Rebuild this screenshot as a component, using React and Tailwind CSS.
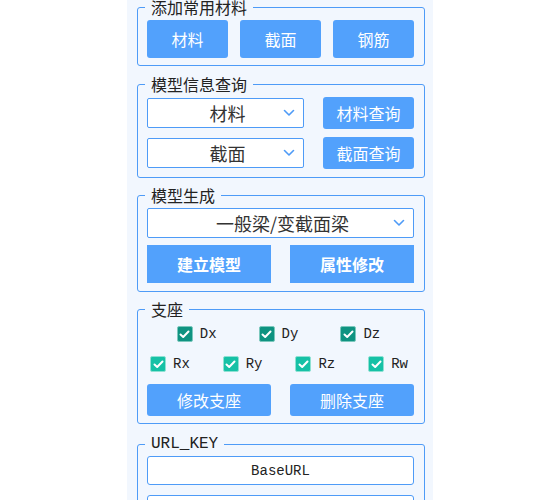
import React from "react";

const CJK = { fontFamily: '"Noto Sans CJK SC", "Noto Sans", sans-serif' };
const MONO = { fontFamily: '"Liberation Mono", "DejaVu Sans Mono", monospace' };

function Chevron() {
  return (
    <svg width="12" height="8" viewBox="0 0 12 8" fill="none">
      <path d="M1.5 1.5 L6 6 L10.5 1.5" stroke="#4e9bf7" strokeWidth="1.6" strokeLinecap="round" strokeLinejoin="round" />
    </svg>
  );
}

function Select({ text, h = "h-[30px]", size = "text-[18px]" }) {
  return (
    <div className={`relative flex items-center justify-center ${h} w-full bg-white border border-[#4e9bf7] rounded-[2px]`}>
      <span className={`${size} leading-none text-[#333] pl-[4px]`}>{text}</span>
      <span className="absolute right-[8px] top-1/2 -translate-y-1/2 flex">
        <Chevron />
      </span>
    </div>
  );
}

function Btn({ children, className = "" }) {
  return (
    <div className={`flex items-center justify-center bg-[#52a1fc] text-white text-[16px] leading-none ${className}`}>
      {children}
    </div>
  );
}

function Box({ dark }) {
  return (
    <span
      className={`flex items-center justify-center w-[16px] h-[16px] rounded-[2px] border ${
        dark ? "bg-[#0f9381] border-[#7cc8bd]" : "bg-[#16c1a6] border-[#8fe1d3]"
      }`}
    >
      <svg width="11" height="9" viewBox="0 0 11 9" fill="none">
        <path d="M1.5 4.5 L4.2 7 L9.5 1.5" stroke="white" strokeWidth="2" strokeLinecap="round" strokeLinejoin="round" />
      </svg>
    </span>
  );
}

function Check({ label, dark }) {
  return (
    <div className="flex items-center gap-[7px]">
      <Box dark={dark} />
      <span className="text-[14px] leading-none text-[#222]" style={MONO}>{label}</span>
    </div>
  );
}

function FS({ title, mono, className = "", children }) {
  return (
    <fieldset className={`border border-[#4e9bf7] rounded-[3px] pl-[9px] pr-[10px] ${className}`}>
      <legend className="ml-[-2px] px-[6px] text-[16px] leading-[20px] text-[#222]" style={mono ? MONO : undefined}>
        {title}
      </legend>
      {children}
    </fieldset>
  );
}

export default function App() {
  return (
    <div className="w-full h-[500px] bg-white overflow-hidden" style={CJK}>
      <div className="mx-auto w-[306px] h-full bg-[#f2f7fe] pl-[10px] pr-[8px] flex flex-col">
        <FS title="添加常用材料" className="mt-[-3px] pt-[3px] pb-[7px]">
          <div className="flex gap-[12px]">
            <Btn className="w-[81px] h-[38px] rounded-[3px]">材料</Btn>
            <Btn className="w-[81px] h-[38px] rounded-[3px]">截面</Btn>
            <Btn className="w-[81px] h-[38px] rounded-[3px]">钢筋</Btn>
          </div>
        </FS>

        <FS title="模型信息查询" className="mt-[8px] pt-[3px] pb-[8px]">
          <div className="flex flex-col gap-[8px]">
            <div className="flex items-center gap-[19px]">
              <div className="w-[157px]"><Select text="材料" /></div>
              <Btn className="w-[91px] h-[32px] rounded-[3px]">材料查询</Btn>
            </div>
            <div className="flex items-center gap-[19px]">
              <div className="w-[157px]"><Select text="截面" /></div>
              <Btn className="w-[91px] h-[32px] rounded-[3px]">截面查询</Btn>
            </div>
          </div>
        </FS>

        <FS title="模型生成" className="mt-[7px] pt-[3px] pb-[8px]">
          <Select text="一般梁/变截面梁" />
          <div className="flex gap-[19px] mt-[7px]">
            <Btn className="w-[124px] h-[38px] font-bold">建立模型</Btn>
            <Btn className="w-[124px] h-[38px] font-bold">属性修改</Btn>
          </div>
        </FS>

        <FS title="支座" className="mt-[7px] pt-[3px] pb-[7px]">
          <div className="h-[24px] flex items-center justify-center gap-[42px] pr-[4px]">
            <Check label="Dx" dark />
            <Check label="Dy" dark />
            <Check label="Dz" dark />
          </div>
          <div className="h-[24px] mt-[6px] flex items-center justify-between pl-[3px] pr-[6px]">
            <Check label="Rx" />
            <Check label="Ry" />
            <Check label="Rz" />
            <Check label="Rw" />
          </div>
          <div className="flex gap-[19px] mt-[8px]">
            <Btn className="w-[124px] h-[32px] rounded-[3px]">修改支座</Btn>
            <Btn className="w-[124px] h-[32px] rounded-[3px]">删除支座</Btn>
          </div>
        </FS>

        <FS title="URL_KEY" mono className="mt-[10px] pt-[2px] pb-[8px]">
          <div className="h-[29px] bg-white border border-[#4e9bf7] rounded-[3px] flex items-center justify-center">
            <span className="text-[14px] leading-none text-[#222]" style={MONO}>BaseURL</span>
          </div>
          <div className="h-[29px] mt-[10px] bg-white border border-[#4e9bf7] rounded-[3px]" />
        </FS>
      </div>
    </div>
  );
}
